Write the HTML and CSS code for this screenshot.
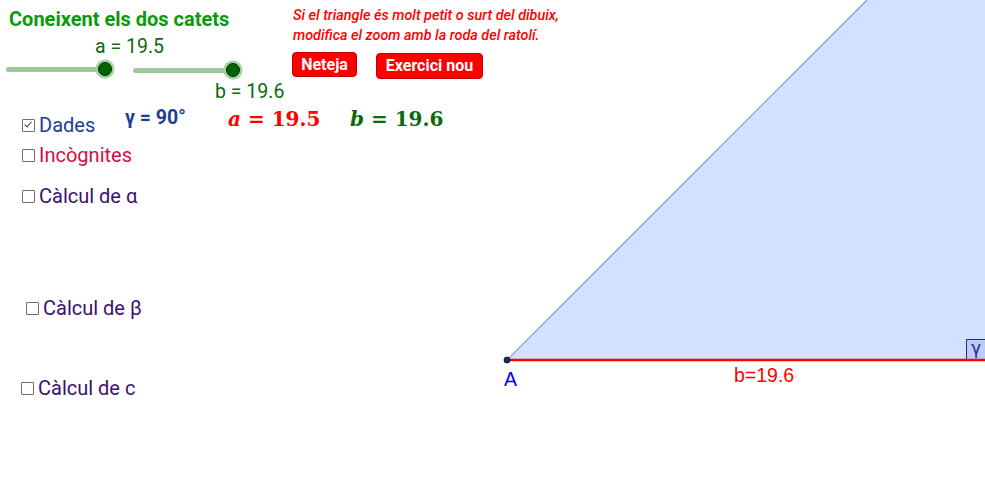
FILE: index.html
```html
<!DOCTYPE html>
<html>
<head>
<meta charset="utf-8">
<link rel="stylesheet" href="styles.css">
</head>
<body>
<div class="applet">
  <svg class="geo" width="985" height="495" viewBox="0 0 985 495">
    <polygon points="507,360 985,360 985,0 867,0" fill="#d2e1fd"/>
    <line x1="507" y1="360" x2="867" y2="0" stroke="#6e98ee" stroke-width="1.2"/>
    <rect x="966.5" y="339.5" width="22" height="21" fill="#bccdf5" stroke="#1a2a9a" stroke-width="1"/>
    <line x1="507" y1="360" x2="985" y2="360" stroke="#ff0000" stroke-width="2.5"/>
    <circle cx="507" cy="360" r="3" fill="#1a2a7a" stroke="#000" stroke-width="0.8"/>
  </svg>
  <div class="gamma-mark">γ</div>
  <div class="lbl-A">A</div>
  <div class="lbl-b">b=19.6</div>

  <div class="title">Coneixent els dos catets</div>

  <div class="slider-label sl-a">a = 19.5</div>
  <div class="slider s1"><span class="track"></span><span class="knob"></span></div>
  <div class="slider s2"><span class="track"></span><span class="knob"></span></div>
  <div class="slider-label sl-b">b = 19.6</div>

  <div class="hint">Si el triangle és molt petit o surt del dibuix,<br>modifica el zoom amb la roda del ratolí.</div>
  <div class="btns">
    <button class="btn b-neteja">Neteja</button>
    <button class="btn b-nou">Exercici nou</button>
  </div>

  <label class="cb cb-dades"><span class="box checked"></span>Dades</label>
  <div class="gamma90">γ = 90°</div>
  <div class="math m-a"><i>a</i> = 19.5</div>
  <div class="math m-b"><i>b</i> = 19.6</div>

  <label class="cb cb-inc"><span class="box"></span>Incògnites</label>
  <label class="cb cb-alpha"><span class="box"></span>Càlcul de α</label>
  <label class="cb cb-beta"><span class="box"></span>Càlcul de β</label>
  <label class="cb cb-c"><span class="box"></span>Càlcul de c</label>
</div>
</body>
</html>
```
FILE: styles.css
```css
html, body {
  margin: 0;
  padding: 0;
  background: #ffffff;
  overflow: hidden;
}
.applet {
  position: relative;
  width: 985px;
  height: 495px;
  font-family: Roboto, "Noto Sans", sans-serif;
  overflow: hidden;
}
.geo {
  position: absolute;
  left: 0;
  top: 0;
}
.gamma-mark {
  position: absolute;
  left: 971px;
  top: 338px;
  font-family: "DejaVu Sans", sans-serif;
  font-size: 17px;
  color: #1a2a9a;
  line-height: 20px;
}
.lbl-A {
  position: absolute;
  left: 504px;
  top: 368px;
  font-family: "Liberation Sans", Arial, sans-serif;
  font-size: 19.5px;
  line-height: 22px;
  color: #0000ff;
}
.lbl-b {
  position: absolute;
  left: 734px;
  top: 364px;
  font-family: "Liberation Sans", Arial, sans-serif;
  font-size: 19.5px;
  line-height: 22px;
  color: #ff0000;
}
.title {
  position: absolute;
  left: 9px;
  top: 6px;
  font-size: 20px;
  font-weight: bold;
  color: #0b9a0b;
  line-height: 26px;
}
.slider-label {
  position: absolute;
  font-size: 19.5px;
  color: #0d690d;
  line-height: 22px;
}
.sl-a { left: 95px; top: 36px; }
.sl-b { left: 215px; top: 81px; }
.slider {
  position: absolute;
  height: 20px;
}
.slider .track {
  position: absolute;
  left: 0;
  right: 0;
  top: 8px;
  height: 5px;
  border-radius: 2.5px;
  background: #9dc89d;
}
.slider .knob {
  position: absolute;
  right: -10px;
  top: 0;
  box-sizing: border-box;
  width: 14px;
  height: 14px;
  border-radius: 50%;
  background: #006400;
  border: 1px solid #00300a;
  box-shadow: 0 0 0 2.5px #a3cfa3;
  margin: 3px;
}
.s1 { left: 6px; top: 59px; width: 99px; }
.s2 { left: 133px; top: 60px; width: 100px; }
.hint {
  position: absolute;
  left: 293px;
  top: 6px;
  font-size: 14.4px;
  font-style: italic;
  font-weight: 500;
  color: #ff0000;
  line-height: 20px;
}
.btns {
  position: absolute;
  left: 292px;
  top: 52px;
  display: flex;
  gap: 19px;
  align-items: flex-start;
}
.btn {
  font-family: Roboto, "Noto Sans", sans-serif;
  font-size: 16px;
  font-weight: bold;
  color: #ffffff;
  background: #ff0000;
  border: 1px solid #c20000;
  border-radius: 4px;
  height: 25px;
  padding: 0;
  line-height: 22px;
}
.b-neteja { width: 65px; }
.b-nou { width: 107px; height: 26px; margin-top: 1px; }
.cb {
  position: absolute;
  display: flex;
  align-items: center;
  font-size: 20px;
  line-height: 24px;
}
.box {
  display: inline-block;
  box-sizing: border-box;
  width: 13px;
  height: 13px;
  border: 1.5px solid #6e6e6e;
  border-radius: 1px;
  margin-right: 4px;
  position: relative;
}
.box.checked::after {
  content: "";
  position: absolute;
  left: 3px;
  top: 0px;
  width: 3px;
  height: 6px;
  border: solid #444;
  border-width: 0 1.5px 1.5px 0;
  transform: rotate(40deg);
}
.cb-dades { left: 22px; top: 113px; color: #1b3f96; }
.cb-inc { left: 22px; top: 143px; color: #d0113f; }
.cb-alpha { left: 22px; top: 184px; color: #3b116f; }
.cb-beta { left: 26px; top: 296px; color: #3b116f; }
.cb-c { left: 21px; top: 376px; color: #3b116f; }
.gamma90 {
  position: absolute;
  left: 125px;
  top: 106px;
  font-size: 19.5px;
  font-weight: bold;
  color: #1b3f96;
  line-height: 24px;
}
.math {
  position: absolute;
  font-family: "DejaVu Serif", "Liberation Serif", serif;
  font-size: 20px;
  font-weight: bold;
  line-height: 24px;
}
.math i { font-style: italic; }
.m-a { left: 228px; top: 107px; color: #ff0000; }
.m-b { left: 350px; top: 107px; color: #0d690d; }
```
